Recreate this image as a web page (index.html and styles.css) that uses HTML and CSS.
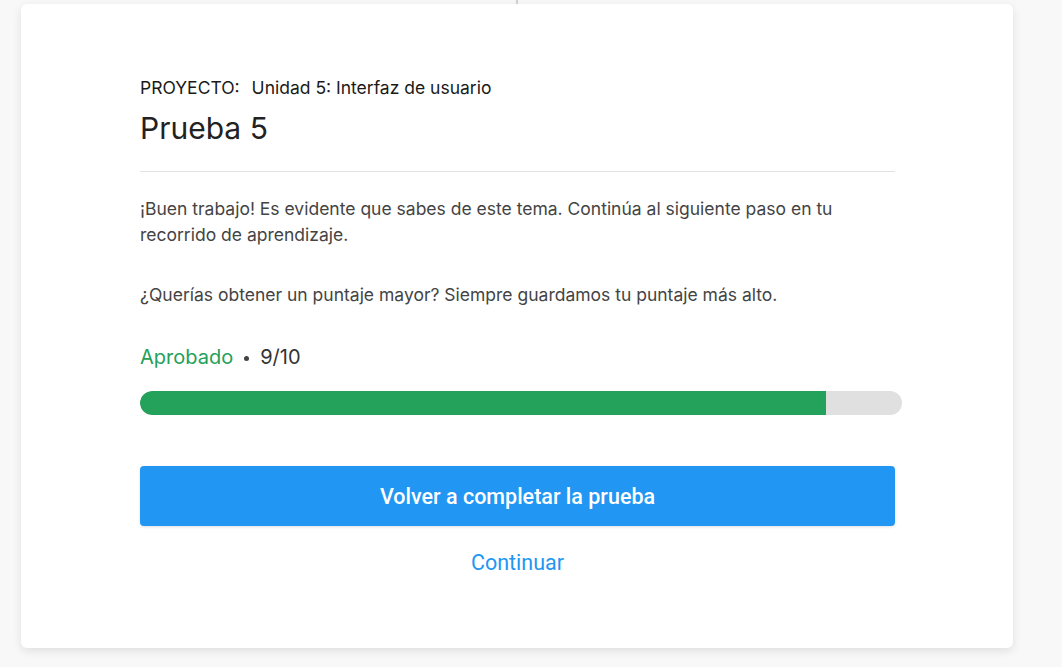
FILE: index.html
```html
<!DOCTYPE html>
<html lang="es">
<head>
<meta charset="utf-8">
<link rel="stylesheet" href="styles.css">
</head>
<body>
<div class="tick"></div>
<div class="card">
  <div class="content">
    <div class="project"><span class="label">PROYECTO:</span><span class="unit">Unidad 5: Interfaz de usuario</span></div>
    <h1 class="title">Prueba 5</h1>
    <hr class="divider">
    <p class="text">¡Buen trabajo! Es evidente que sabes de este tema. Continúa al siguiente paso en tu recorrido de aprendizaje.</p>
    <p class="text second">¿Querías obtener un puntaje mayor? Siempre guardamos tu puntaje más alto.</p>
    <div class="result"><span class="passed">Aprobado</span><span class="dot"></span><span class="score">9/10</span></div>
    <div class="bar"><div class="fill" style="width:90%"></div></div>
    <button class="btn">Volver a completar la prueba</button>
    <div class="cont"><a class="link">Continuar</a></div>
  </div>
</div>
</body>
</html>
```
FILE: styles.css
```css
html, body { margin: 0; padding: 0; }
body {
  background: #f8f8f8;
  font-family: Inter, "Noto Sans", sans-serif;
  height: 667px;
  overflow: hidden;
  position: relative;
}
.tick {
  position: absolute;
  left: 516px;
  top: 0;
  width: 2px;
  height: 4px;
  background: #cfcfcf;
}
.card {
  margin: 4px 0 0 21px;
  width: 992px;
  height: 644px;
  background: #fff;
  border-radius: 6px;
  box-shadow: 0 3px 10px rgba(0,0,0,0.10);
  box-sizing: border-box;
  padding: 72px 0 0 119px;
}
.content { width: 755px; }
.project {
  font-size: 17.5px;
  color: #1a1a1a;
  line-height: 24px;
}
.label { margin-right: 12px; }
.title {
  margin: 10px 0 0;
  font-size: 30px;
  font-weight: 400;
  color: #222;
  line-height: 36px;
}
.divider {
  margin: 25px 0 0;
  border: none;
  border-top: 1px solid #e2e2e2;
  height: 0;
}
.text {
  margin: 24px 0 0;
  font-size: 17.5px;
  line-height: 26px;
  color: #444;
}
.text.second { margin-top: 34px; }
.result {
  margin-top: 35px;
  display: flex;
  align-items: center;
  font-size: 20px;
  line-height: 28px;
}
.passed { color: #24a05a; }
.dot {
  width: 5px; height: 5px; border-radius: 50%;
  background: #444;
  margin: 2px 11px 0 11px;
}
.score { color: #333; }
.bar {
  margin-top: 20px;
  width: 762px;
  height: 24px;
  border-radius: 12px;
  background: #e0e0e0;
  overflow: hidden;
}
.fill {
  height: 100%;
  background: #24a25b;
  border-radius: 12px 0 0 12px;
}
.btn {
  display: block;
  margin-top: 51px;
  width: 755px;
  height: 60px;
  border: none;
  border-radius: 4px;
  background: #2196f3;
  color: #fff;
  font-family: Roboto, sans-serif;
  font-size: 21.5px;
  font-weight: 500;
  box-shadow: 0 1px 3px rgba(0,0,0,0.12);
}
.cont {
  margin-top: 24px;
  text-align: center;
}
.link {
  font-family: Roboto, sans-serif;
  font-size: 21.5px;
  color: #2196f3;
  line-height: 26px;
}
```
